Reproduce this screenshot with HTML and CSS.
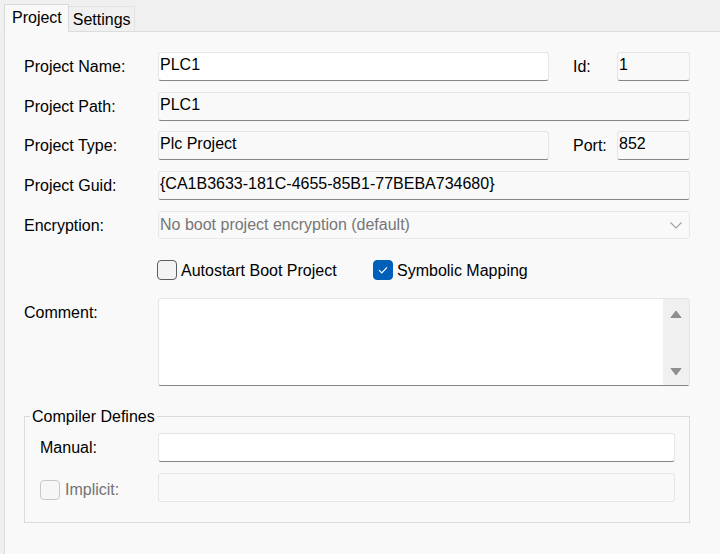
FILE: index.html
```html
<!DOCTYPE html>
<html>
<head>
<meta charset="utf-8">
<link rel="stylesheet" href="styles.css">
</head>
<body>
<div class="tabs">
  <div class="tab active">Project</div>
  <div class="tab">Settings</div>
</div>
<div class="panel">
  <div class="grid">
    <div class="lbl">Project Name:</div>
    <div class="field white">PLC1</div>
    <div></div>
    <div class="lbl">Id:</div>
    <div class="field">1</div>

    <div class="lbl">Project Path:</div>
    <div class="field span">PLC1</div>

    <div class="lbl">Project Type:</div>
    <div class="field">Plc Project</div>
    <div></div>
    <div class="lbl">Port:</div>
    <div class="field">852</div>

    <div class="lbl">Project Guid:</div>
    <div class="field span">{CA1B3633-181C-4655-85B1-77BEBA734680}</div>

    <div class="lbl lbl28">Encryption:</div>
    <div class="select span">
      <span>No boot project encryption (default)</span>
      <svg class="chev" width="12" height="7" viewBox="0 0 12 7"><polyline points="0.5,0.5 6,6 11.5,0.5" fill="none" stroke="#a0a0a0" stroke-width="1.1"/></svg>
    </div>
  </div>

  <div class="checks">
    <div class="check first"><span class="box"></span><span class="ctext">Autostart Boot Project</span></div>
    <div class="check"><span class="box checked"><svg width="18" height="18" viewBox="0 0 18 18"><polyline points="5,9.2 7.8,12 13,6.4" fill="none" stroke="#ffffff" stroke-width="1.2"/></svg></span><span class="ctext">Symbolic Mapping</span></div>
  </div>

  <div class="grid2">
    <div class="lbl">Comment:</div>
    <div class="textarea">
      <div class="scroll">
        <svg width="12" height="8" viewBox="0 0 12 8"><polygon points="1,7.5 6,1 11,7.5" fill="#8f8f8f" stroke="#8f8f8f" stroke-width="1" stroke-linejoin="round"/></svg>
        <svg width="12" height="8" viewBox="0 0 12 8"><polygon points="1,0.5 6,7 11,0.5" fill="#8f8f8f" stroke="#8f8f8f" stroke-width="1" stroke-linejoin="round"/></svg>
      </div>
    </div>
  </div>

  <fieldset class="group">
    <legend>Compiler Defines</legend>
    <div class="grid3">
      <div class="lbl">Manual:</div>
      <div class="field white"></div>
      <div class="check implicit"><span class="box disabled"></span><span>Implicit:</span></div>
      <div class="field flat"></div>
    </div>
  </fieldset>
</div>
</body>
</html>
```

FILE: styles.css
```css
* { box-sizing: border-box; }
html, body { margin: 0; padding: 0; }
body {
  width: 720px;
  height: 554px;
  overflow: hidden;
  background: #f0f0f0;
  font-family: "Liberation Sans", Arial, sans-serif;
  font-size: 16px;
  color: #000;
}
.tabs {
  display: flex;
  align-items: flex-end;
  height: 31px;
  padding-left: 4px;
}
.tab {
  height: 25px;
  line-height: 25px;
  padding: 0 3px 0 4px;
  background: #f0f0f0;
  border-top: 1px solid #e3e3e3;
  border-right: 1px solid #e3e3e3;
  white-space: nowrap;
}
.tab.active {
  height: 28px;
  line-height: 26px;
  padding: 0 6px 0 7px;
  background: #f9f9f9;
  border: 1px solid #d9d9d9;
  border-bottom: none;
  margin-bottom: -1px;
  position: relative;
  z-index: 1;
}
.panel {
  margin-left: 4px;
  height: 523px;
  background: #f9f9f9;
  border-left: 1px solid #dcdcdc;
  border-top: 1px solid #dcdcdc;
  padding: 20px 30px 0 19px;
}
.grid {
  display: grid;
  grid-template-columns: 134px 391px 24px 44px 73px;
  row-gap: 10.67px;
}
.lbl {
  height: 29px;
  line-height: 30px;
  white-space: nowrap;
}
.lbl28 { height: 28px; line-height: 29px; }
.field {
  height: 29px;
  border: 1px solid #e5e5e5;
  border-bottom-color: #868686;
  border-radius: 3px;
  background: #f9f9f9;
  padding: 0 0 0 1px;
  line-height: 23px;
  white-space: nowrap;
  overflow: hidden;
}
.field.white { background: #fff; }
.field.flat { border-bottom-color: #e5e5e5; }
.span { grid-column: 2 / -1; }
.select {
  height: 28px;
  border: 1px solid #e8e8e8;
  border-radius: 3px;
  background: #f9f9f9;
  color: #767676;
  display: flex;
  align-items: center;
  justify-content: space-between;
  padding: 1px 7px 0 1px;
}
.chev { margin-top: 0; }
.checks {
  display: flex;
  align-items: center;
  height: 24px;
  margin-top: 19.33px;
  margin-left: 133px;
}
.check {
  display: flex;
  align-items: center;
  gap: 4px;
  line-height: 26px;
  white-space: nowrap;
}
.ctext { padding-top: 2px; }
.check.first { width: 216px; }
.box {
  width: 20px;
  height: 20px;
  border: 1px solid #5c5c5c;
  border-radius: 4px;
  background: #f3f3f3;
  display: flex;
  align-items: center;
  justify-content: center;
}
.box.checked {
  background: #005fb8;
  border-color: #005fb8;
}
.box.disabled {
  border-color: #c8c8c8;
  background: #f6f6f6;
}
.grid2 {
  display: grid;
  grid-template-columns: 134px 532px;
  margin-top: 16px;
}
.textarea {
  height: 88px;
  background: #fff;
  border: 1px solid #e5e5e5;
  border-bottom-color: #868686;
  border-radius: 3px;
  display: flex;
  justify-content: flex-end;
}
.scroll {
  width: 26px;
  background: #f0f0f0;
  display: flex;
  flex-direction: column;
  justify-content: space-between;
  align-items: center;
  padding: 11px 0 9px;
}
.group {
  margin: 20px 0 0 0;
  border: 1px solid #dcdcdc;
  padding: 5px 14px 20px 5px;
  min-width: 0;
}
.group legend {
  padding: 0 2px;
  line-height: 22px;
}
.grid3 {
  display: grid;
  grid-template-columns: 118px 517px;
  row-gap: 11px;
  margin-left: 10px;
}
.grid3 .lbl { line-height: 30px; }
.check.implicit {
  gap: 5px;
  height: 29px;
  padding-top: 6px;
  color: #737373;
}
```
